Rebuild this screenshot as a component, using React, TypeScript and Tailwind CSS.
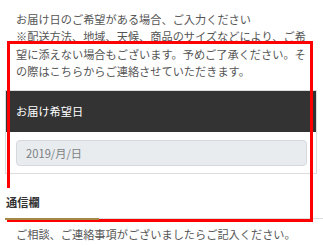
import React from "react";

const font = "font-['Noto_Sans_CJK_JP','Noto_Sans',sans-serif]";

export default function App() {
  return (
    <div className={`relative h-[246px] w-[323px] overflow-hidden bg-white ${font}`}>
      <p className="ml-4 w-[296px] pt-[11px] text-[11.2px] leading-[17.4px] text-[#555]">
        お届け日のご希望がある場合、ご入力ください
        <br />
        ※配送方法、地域、天候、商品のサイズなどにより、ご希望に添えない場合もございます。予めご了承ください。その際はこちらからご連絡させていただきます。
      </p>

      <div className="ml-[5px] mt-[9px] w-[312px] border border-[#dcdcdc]">
        <div className="flex h-[41px] items-center bg-[#333] px-[10px] text-[11.2px] text-white">
          お届け希望日
        </div>
        <div className="pb-[7px] pl-[10px] pr-[9px] pt-[7px]">
          <input
            type="text"
            placeholder="2019/月/日"
            readOnly
            className="h-[26px] w-full rounded-[4px] border border-[#d5d9dd] bg-[#e9ecef] px-[9px] text-[11.2px] text-[#555] placeholder:text-[#7b7f83] outline-none"
          />
        </div>
      </div>

      <div className="mt-[14px] flex items-end">
        <div className="relative z-20 ml-[5px] w-[94px] border-b-2 border-[#a08a45] bg-white pb-[7px] pl-px pt-[6px] text-[11.2px] font-bold leading-[17px] text-[#333]">
          通信欄
        </div>
        <div className="mb-px flex-1 border-b border-[#ddd]" />
      </div>

      <p className="ml-4 mt-[6px] text-[11.2px] leading-[17.4px] text-[#555]">
        ご相談、ご連絡事項がございましたらご記入ください。
      </p>

      <div className="pointer-events-none absolute left-[7px] top-[41px] z-10 h-[181px] w-[306px] border-[3px] border-[#f00]" />
    </div>
  );
}
